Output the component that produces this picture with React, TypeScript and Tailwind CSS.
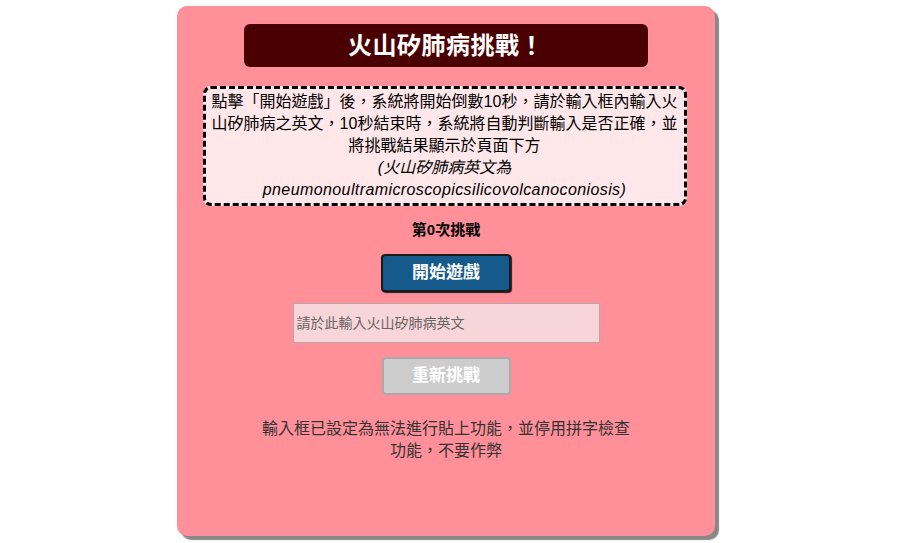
import React from "react";

const font = "font-['Liberation_Sans','Noto_Sans_CJK_TC',sans-serif]";

const App: React.FC = () => {
  return (
    <div className={`w-[898px] h-[543px] bg-white flex justify-center pt-[6px] ${font}`}>
      {/* Card */}
      <div className="w-[538px] h-[530px] ml-[-6px] rounded-[10px] bg-[#ff8f99] shadow-[4px_4px_1px_#888] flex flex-col items-center pt-[18px]">
        {/* Title */}
        <div className="w-[404px] h-[43px] rounded-[6px] bg-[#4a0000] flex items-center justify-center">
          <h1 className="text-white text-[24px] leading-[30px] font-bold tracking-[0.5px]">火山矽肺病挑戰！</h1>
        </div>

        {/* Description */}
        <div className="mt-[19px] mr-[3px] w-[484px] border-[3px] border-dashed border-black rounded-[8px] bg-[#ffe7ea] px-[5px] py-[2px] text-center text-[16px] leading-[22px] text-black">
          <p>
            點擊「開始遊戲」後，系統將開始倒數10秒，請於輸入框內輸入火山矽肺病之英文，10秒結束時，系統將自動判斷輸入是否正確，並將挑戰結果顯示於頁面下方
          </p>
          <p className="italic">
            (火山矽肺病英文為
            <br />
            <span className="tracking-[0.4px]">pneumonoultramicroscopicsilicovolcanoconiosis)</span>
          </p>
        </div>

        {/* Counter */}
        <p className="mt-[14px] text-[15px] leading-[20px] font-bold text-black">第0次挑戰</p>

        {/* Start */}
        <button className="mt-[14px] w-[130px] h-[38px] rounded-[4px] bg-[#155a8a] border-2 border-[#1a1a1a] shadow-[1px_1px_1px_#222] text-white text-[17px] font-bold">
          開始遊戲
        </button>

        {/* Input */}
        <input
          type="text"
          spellCheck={false}
          placeholder="請於此輸入火山矽肺病英文"
          className={`mt-[11px] w-[307px] h-[40px] bg-[#f8d5d9] border border-[#b9a6a8] px-[3px] text-[14px] text-black placeholder:text-[#666] outline-none ${font}`}
        />

        {/* Reset */}
        <button
          disabled
          className="mt-[14px] w-[129px] h-[38px] rounded-[4px] bg-[#cccccc] border-2 border-[#aaaaaa] text-white text-[17px] font-bold"
        >
          重新挑戰
        </button>

        {/* Note */}
        <p className="mt-[23px] w-[380px] text-center text-[16px] leading-[22px] text-[#333]">
          輸入框已設定為無法進行貼上功能，並停用拼字檢查功能，不要作弊
        </p>
      </div>
    </div>
  );
};

export default App;
